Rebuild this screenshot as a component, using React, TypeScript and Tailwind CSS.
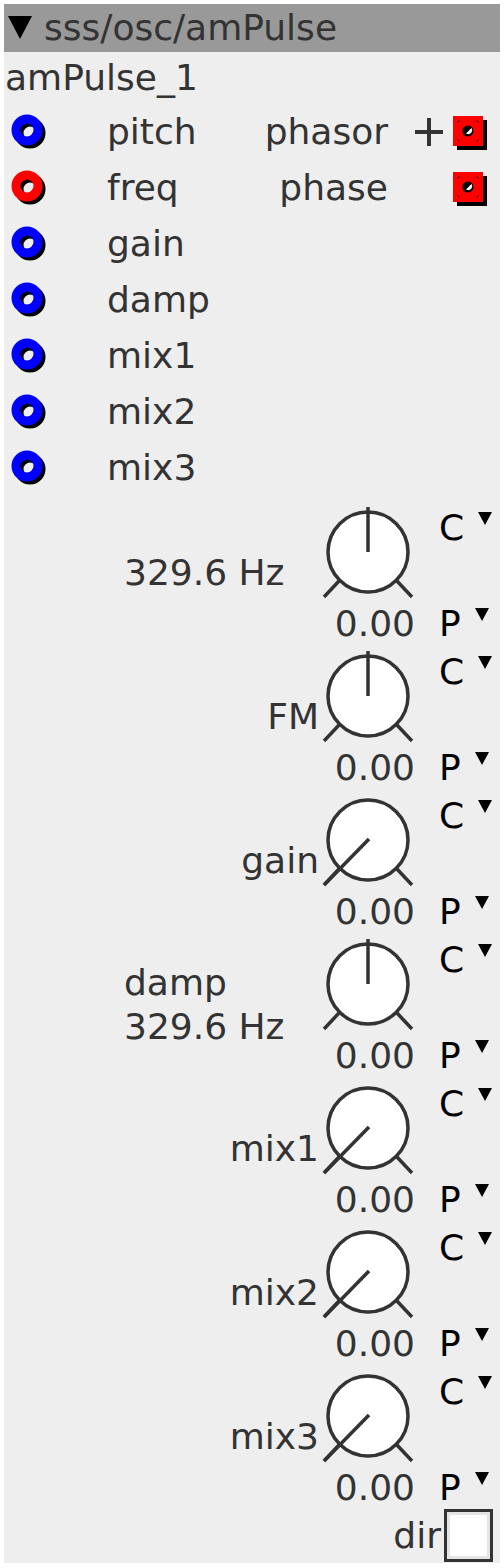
import React from "react";

const FONT = "font-['DejaVu_Sans','Liberation_Sans',sans-serif]";

function Inlet({ color }: { color: string }) {
  return (
    <svg width="42" height="42" viewBox="0 0 42 42">
      <circle cx="21" cy="22" r="11" fill="none" stroke="#000" strokeWidth="9" />
      <circle cx="18" cy="19" r="11" fill="none" stroke={color} strokeWidth="9" />
    </svg>
  );
}

function Outlet() {
  return (
    <svg width="36" height="36" viewBox="0 0 36 36">
      <rect x="4" y="4" width="30" height="30" fill="#000" />
      <rect x="0" y="0" width="30" height="30" fill="#ff0000" />
      <path d="M5 7 V5 H7 M23 5 H25 V7 M25 23 V25 H23 M7 25 H5 V23" stroke="#600" strokeWidth="1" fill="none" />
      <circle cx="15" cy="15" r="5.5" fill="#000" />
      <path d="M11.5 18 A4 4 0 0 1 17 12.5 Z" fill="#fff" transform="rotate(180 15 15)" />
    </svg>
  );
}

function Plus() {
  return (
    <svg width="30" height="30" viewBox="0 0 30 30">
      <line x1="1" y1="15" x2="29" y2="15" stroke="#333" strokeWidth="4" />
      <line x1="15" y1="1" x2="15" y2="29" stroke="#333" strokeWidth="4" />
    </svg>
  );
}

function Knob({ bipolar }: { bipolar: boolean }) {
  const cx = 50;
  const cy = 48;
  return (
    <svg width="100" height="98" viewBox="0 0 100 98">
      <line x1={cx - 29} y1={cy + 29} x2={cx - 44} y2={cy + 45} stroke="#333" strokeWidth="3.5" />
      <line x1={cx + 29} y1={cy + 29} x2={cx + 44} y2={cy + 45} stroke="#333" strokeWidth="3.5" />
      <circle cx={cx} cy={cy} r="40" fill="#fff" stroke="#333" strokeWidth="3.5" />
      {bipolar ? (
        <line x1={cx} y1={cy} x2={cx} y2={3} stroke="#333" strokeWidth="3.5" />
      ) : (
        <line x1={cx + 1} y1={cy - 1} x2={cx - 44} y2={cy + 45} stroke="#333" strokeWidth="3.5" />
      )}
    </svg>
  );
}

function Tri() {
  return (
    <svg width="14" height="13" viewBox="0 0 14 13" className="ml-[14px] mt-[6px]">
      <polygon points="0,0 14,0 7,13" fill="#000" />
    </svg>
  );
}

type KRow = { lines: string[]; align: "left" | "right"; bipolar: boolean };

const rows: KRow[] = [
  { lines: ["329.6 Hz"], align: "left", bipolar: true },
  { lines: ["FM"], align: "right", bipolar: true },
  { lines: ["gain"], align: "right", bipolar: false },
  { lines: ["damp", "329.6 Hz"], align: "left", bipolar: true },
  { lines: ["mix1"], align: "right", bipolar: false },
  { lines: ["mix2"], align: "right", bipolar: false },
  { lines: ["mix3"], align: "right", bipolar: false },
];

const inlets = [
  { name: "pitch", color: "#0000ff" },
  { name: "freq", color: "#ff0000" },
  { name: "gain", color: "#0000ff" },
  { name: "damp", color: "#0000ff" },
  { name: "mix1", color: "#0000ff" },
  { name: "mix2", color: "#0000ff" },
  { name: "mix3", color: "#0000ff" },
];

const outlets: Record<number, { name: string; plus: boolean }> = {
  0: { name: "phasor", plus: true },
  1: { name: "phase", plus: false },
};

export default function App() {
  return (
    <div className={`w-[504px] h-[1568px] bg-white p-1 ${FONT} text-[36px] text-[#333]`}>
      <div className="w-[496px] h-[1559px] bg-[#eeeeee] flex flex-col">
        {/* header */}
        <div className="h-[48px] bg-[#999999] flex items-center pl-1">
          <svg width="24" height="23" viewBox="0 0 24 23" className="mt-[-2px]">
            <polygon points="0,0 24,0 12,23" fill="#000" />
          </svg>
          <span className="ml-[12px] leading-[48px]">sss/osc/amPulse</span>
        </div>
        {/* instance name */}
        <div className="h-[52px] flex items-center pl-[1px] leading-[52px]">amPulse_1</div>
        {/* inlets / outlets */}
        <div className="flex flex-col">
          {inlets.map((inl, i) => {
            const out = outlets[i];
            return (
              <div key={inl.name} className="h-[56px] flex items-center">
                <div className="w-[103px] pl-[5px] flex items-center">
                  <Inlet color={inl.color} />
                </div>
                <span className="leading-[56px]">{inl.name}</span>
                <div className="flex-1" />
                {out && (
                  <div className="flex items-center pr-[11px]">
                    <span className="leading-[56px] mr-[2px]">{out.name}</span>
                    <div className={`ml-[24px] ${out.plus ? "" : "invisible"}`}>
                      <Plus />
                    </div>
                    <div className="ml-[9px] mt-[4px]">
                      <Outlet />
                    </div>
                  </div>
                )}
              </div>
            );
          })}
        </div>
        {/* knobs */}
        <div className="flex flex-col pt-2">
          {rows.map((r, i) => (
            <div key={i} className="h-[144px] grid grid-cols-[315px_100px_81px]">
              <div
                className={`flex flex-col justify-center pb-[6px] leading-[44px] ${
                  r.align === "left" ? "items-start pl-[120px]" : "items-end"
                }`}
              >
                {r.lines.map((l) => (
                  <span key={l}>{l}</span>
                ))}
              </div>
              <div className="flex flex-col items-end">
                <div className="self-center ml-[-2px]">
                  <Knob bipolar={r.bipolar} />
                </div>
                <span className="leading-[44px] pr-[4px]">0.00</span>
              </div>
              <div className="flex flex-col pl-[20px] text-black">
                <div className="flex items-start mt-[2px] leading-[44px]">
                  <span>C</span>
                  <Tri />
                </div>
                <div className="flex items-start mt-auto mb-[2px] leading-[44px]">
                  <span>P</span>
                  <Tri />
                </div>
              </div>
            </div>
          ))}
        </div>
        {/* dir */}
        <div className="flex items-center justify-end pr-[7px] mt-[-4px] h-[55px]">
          <span className="leading-[44px] mr-[3px]">dir</span>
          <div className="w-[49px] h-[53px] border-[3px] border-[#333] bg-white p-0">
            <div className="w-full h-full border-[3px] border-[#e4e4e4] bg-white" />
          </div>
        </div>
      </div>
    </div>
  );
}
